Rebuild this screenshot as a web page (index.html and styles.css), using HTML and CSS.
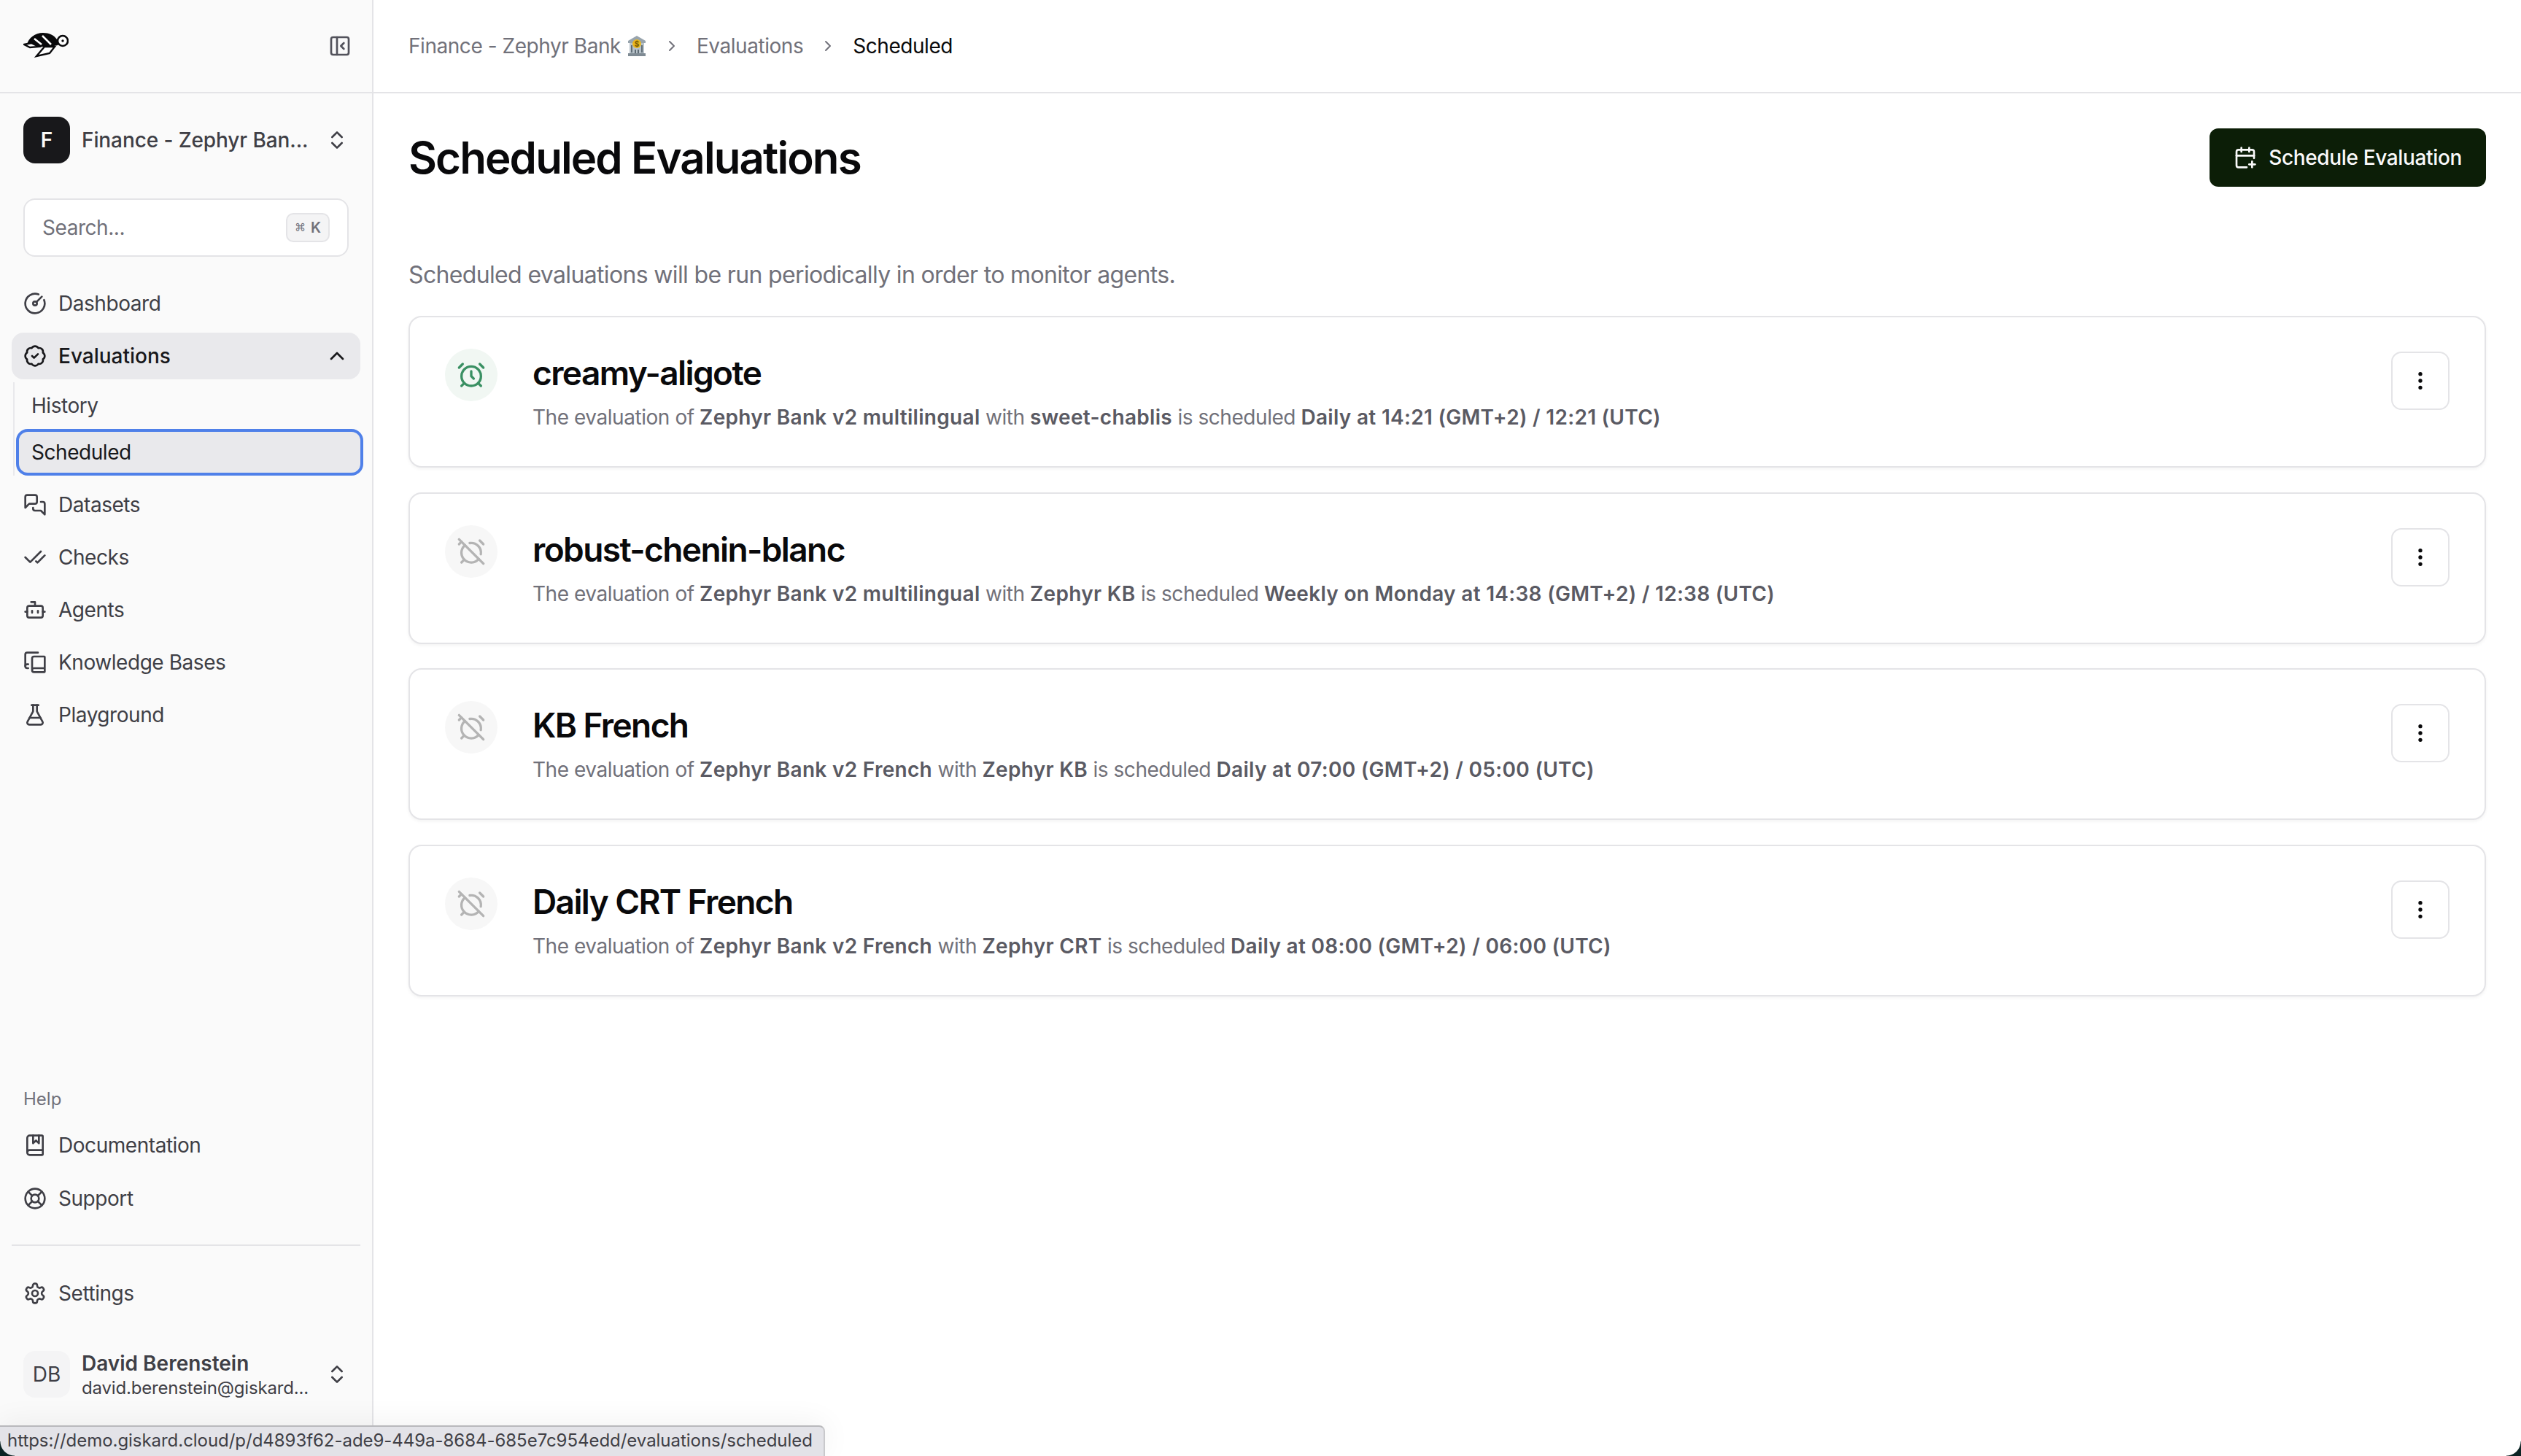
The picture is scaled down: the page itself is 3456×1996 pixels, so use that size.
FILE: index.html
```html
<!DOCTYPE html>
<html lang="en">
<head>
<meta charset="utf-8">
<title>Scheduled Evaluations</title>
<link rel="stylesheet" href="styles.css">
</head>
<body>
<svg class="sprites" width="0" height="0" aria-hidden="true">
  <defs>
    <symbol id="i-gauge" viewBox="0 0 24 24"><path d="M15.6 2.7a10 10 0 1 0 5.7 5.7"/><circle cx="12" cy="12" r="2"/><path d="M13.4 10.6 19 5"/></symbol>
    <symbol id="i-badge" viewBox="0 0 24 24"><path d="M3.85 8.62a4 4 0 0 1 4.78-4.77 4 4 0 0 1 6.74 0 4 4 0 0 1 4.78 4.78 4 4 0 0 1 0 6.74 4 4 0 0 1-4.77 4.78 4 4 0 0 1-6.75 0 4 4 0 0 1-4.78-4.77 4 4 0 0 1 0-6.76Z"/><path d="m9 12 2 2 4-4"/></symbol>
    <symbol id="i-msgs" viewBox="0 0 24 24"><path d="M14 9a2 2 0 0 1-2 2H6l-4 4V4a2 2 0 0 1 2-2h8a2 2 0 0 1 2 2z"/><path d="M18 9h2a2 2 0 0 1 2 2v11l-4-4h-6a2 2 0 0 1-2-2v-1"/></symbol>
    <symbol id="i-checks" viewBox="0 0 24 24"><path d="M18 6 7 17l-5-5"/><path d="m22 10-7.5 7.5L13 16"/></symbol>
    <symbol id="i-bot" viewBox="0 0 24 24"><path d="M12 8V4H8"/><rect width="16" height="12" x="4" y="8" rx="2"/><path d="M2 14h2"/><path d="M20 14h2"/><path d="M15 13v2"/><path d="M9 13v2"/></symbol>
    <symbol id="i-books" viewBox="0 0 24 24"><path d="M2 16V4a2 2 0 0 1 2-2h11"/><path d="M22 18H11a2 2 0 1 0 0 4h10.5a.5.5 0 0 0 .5-.5v-15a.5.5 0 0 0-.5-.5H11a2 2 0 0 0-2 2v12"/><path d="M5 14H4a2 2 0 1 0 0 4h1"/></symbol>
    <symbol id="i-flask" viewBox="0 0 24 24"><path d="M14 2v6a2 2 0 0 0 .245.96l5.51 10.08A2 2 0 0 1 18 22H6a2 2 0 0 1-1.755-2.96l5.51-10.08A2 2 0 0 0 10 8V2"/><path d="M6.453 15h11.094"/><path d="M8.5 2h7"/></symbol>
    <symbol id="i-book" viewBox="0 0 24 24"><path d="M10 2v8l3-3 3 3V2"/><path d="M4 19.5v-15A2.5 2.5 0 0 1 6.5 2H19a1 1 0 0 1 1 1v18a1 1 0 0 1-1 1H6.5a1 1 0 0 1 0-5H20"/></symbol>
    <symbol id="i-buoy" viewBox="0 0 24 24"><circle cx="12" cy="12" r="10"/><path d="m4.93 4.93 4.24 4.24"/><path d="m14.83 9.17 4.24-4.24"/><path d="m14.83 14.83 4.24 4.24"/><path d="m9.17 14.83-4.24 4.24"/><circle cx="12" cy="12" r="4"/></symbol>
    <symbol id="i-gear" viewBox="0 0 24 24"><path d="M12.22 2h-.44a2 2 0 0 0-2 2v.18a2 2 0 0 1-1 1.73l-.43.25a2 2 0 0 1-2 0l-.15-.08a2 2 0 0 0-2.73.73l-.22.38a2 2 0 0 0 .73 2.73l.15.1a2 2 0 0 1 1 1.72v.51a2 2 0 0 1-1 1.74l-.15.09a2 2 0 0 0-.73 2.73l.22.38a2 2 0 0 0 2.73.73l.15-.08a2 2 0 0 1 2 0l.43.25a2 2 0 0 1 1 1.73V20a2 2 0 0 0 2 2h.44a2 2 0 0 0 2-2v-.18a2 2 0 0 1 1-1.73l.43-.25a2 2 0 0 1 2 0l.15.08a2 2 0 0 0 2.73-.73l.22-.39a2 2 0 0 0-.73-2.73l-.15-.08a2 2 0 0 1-1-1.74v-.5a2 2 0 0 1 1-1.74l.15-.09a2 2 0 0 0 .73-2.73l-.22-.38a2 2 0 0 0-2.73-.73l-.15.08a2 2 0 0 1-2 0l-.43-.25a2 2 0 0 1-1-1.73V4a2 2 0 0 0-2-2z"/><circle cx="12" cy="12" r="3"/></symbol>
    <symbol id="i-updown" viewBox="0 0 24 24"><path d="m7 15 5 5 5-5"/><path d="m7 9 5-5 5 5"/></symbol>
    <symbol id="i-up" viewBox="0 0 24 24"><path d="m18 15-6-6-6 6"/></symbol>
    <symbol id="i-right" viewBox="0 0 24 24"><path d="m9 18 6-6-6-6"/></symbol>
    <symbol id="i-panel" viewBox="0 0 24 24"><rect width="18" height="18" x="3" y="3" rx="2"/><path d="M9 3v18"/><path d="m16 15-3-3 3-3"/></symbol>
    <symbol id="i-calplus" viewBox="0 0 24 24"><path d="M16 19h6"/><path d="M16 2v4"/><path d="M19 16v6"/><path d="M21 12.598V6a2 2 0 0 0-2-2H5a2 2 0 0 0-2 2v14a2 2 0 0 0 2 2h8.5"/><path d="M3 10h18"/><path d="M8 2v4"/></symbol>
    <symbol id="i-dots" viewBox="0 0 24 24"><circle cx="12" cy="12" r="1"/><circle cx="12" cy="5" r="1"/><circle cx="12" cy="19" r="1"/></symbol>
    <symbol id="i-alarm" viewBox="0 0 24 24"><circle cx="12" cy="13" r="8"/><path d="M12 9v4l2 2"/><path d="M5 3 2 6"/><path d="m22 6-3-3"/><path d="M6.38 18.7 4 21"/><path d="M17.64 18.67 20 21"/></symbol>
    <symbol id="i-alarmoff" viewBox="0 0 24 24"><path d="M6.87 6.87a8 8 0 1 0 11.26 11.26"/><path d="M19.9 14.25a8 8 0 0 0-9.15-9.15"/><path d="m22 6-3-3"/><path d="M6.26 18.67 4 21"/><path d="m2 2 20 20"/><path d="M4 4 2 6"/></symbol>
  </defs>
</svg>

<div class="app">
  <aside class="sidebar">
    <div class="side-top">
      <svg class="logo" viewBox="0 0 62 34" width="62" height="34" aria-label="Logo">
        <path class="logo-black" d="M5 16C7 7 16 0 27 0c8 0 15 3 19 9l3 4-4 4-5 2H14z"/>
        <path class="logo-neck" d="M44 16c3 0 4-1 5-4"/>
        <circle class="logo-head" cx="54" cy="11" r="7"/>
        <circle class="logo-eye" cx="54" cy="11" r="1.7"/>
        <path class="logo-stripe" d="M15 8l10 8M26 4l12 12"/>
        <path class="logo-flip" d="M1 16l10-2 10 5-12 1z"/>
        <path class="logo-flip" d="M18 32l11-13h14l-7 9z"/>
      </svg>
      <svg class="ico ico-panel"><use href="#i-panel"/></svg>
    </div>

    <div class="workspace">
      <span class="ws-avatar">F</span>
      <span class="ws-name">Finance - Zephyr Ban...</span>
      <svg class="ico"><use href="#i-updown"/></svg>
    </div>

    <div class="search">
      <span class="search-text">Search...</span>
      <span class="kbd"><span class="kbd-cmd">⌘</span><span>K</span></span>
    </div>

    <nav class="nav">
      <a class="nav-item"><svg class="ico"><use href="#i-gauge"/></svg><span>Dashboard</span></a>
      <a class="nav-item nav-open"><svg class="ico"><use href="#i-badge"/></svg><span>Evaluations</span><svg class="ico nav-chevron"><use href="#i-up"/></svg></a>
      <div class="sub">
        <a class="sub-item">History</a>
        <a class="sub-item sub-active">Scheduled</a>
      </div>
      <a class="nav-item"><svg class="ico"><use href="#i-msgs"/></svg><span>Datasets</span></a>
      <a class="nav-item"><svg class="ico"><use href="#i-checks"/></svg><span>Checks</span></a>
      <a class="nav-item"><svg class="ico"><use href="#i-bot"/></svg><span>Agents</span></a>
      <a class="nav-item"><svg class="ico"><use href="#i-books"/></svg><span>Knowledge Bases</span></a>
      <a class="nav-item"><svg class="ico"><use href="#i-flask"/></svg><span>Playground</span></a>
    </nav>

    <div class="side-foot">
      <div class="help-label">Help</div>
      <div class="nav foot-nav">
        <a class="nav-item"><svg class="ico"><use href="#i-book"/></svg><span>Documentation</span></a>
        <a class="nav-item"><svg class="ico"><use href="#i-buoy"/></svg><span>Support</span></a>
      </div>
      <div class="divider"></div>
      <div class="nav">
        <a class="nav-item"><svg class="ico"><use href="#i-gear"/></svg><span>Settings</span></a>
      </div>
      <div class="user">
        <span class="user-avatar">DB</span>
        <span class="user-text">
          <span class="user-name">David Berenstein</span>
          <span class="user-mail">david.berenstein@giskard...</span>
        </span>
        <svg class="ico"><use href="#i-updown"/></svg>
      </div>
    </div>
  </aside>

  <main class="main">
    <header class="crumbs">
      <span class="crumb">Finance - Zephyr Bank</span>
      <svg class="bank" viewBox="0 0 28 28" width="28" height="28" aria-label="bank">
        <path class="bank-roof" d="M14 0 26 7v3H2V7z"/>
        <rect class="bank-wall" x="4" y="10" width="20" height="15"/>
        <path class="bank-col" d="M7 13v10M21 13v10M12 19v6M16 19v6"/>
        <rect class="bank-base" x="2" y="24" width="24" height="4"/>
        <circle class="bank-coin" cx="14" cy="11" r="6"/>
        <text class="bank-sign" x="14" y="14.5" text-anchor="middle">$</text>
      </svg>
      <svg class="ico-crumb"><use href="#i-right"/></svg>
      <span class="crumb">Evaluations</span>
      <svg class="ico-crumb"><use href="#i-right"/></svg>
      <span class="crumb crumb-current">Scheduled</span>
    </header>

    <div class="page">
      <div class="page-head">
        <h1 class="title">Scheduled Evaluations</h1>
        <button class="btn-primary"><svg class="ico"><use href="#i-calplus"/></svg><span>Schedule Evaluation</span></button>
      </div>
      <p class="lead">Scheduled evaluations will be run periodically in order to monitor agents.</p>

      <div class="cards">
        <article class="card">
          <span class="status status-on"><svg class="ico-status"><use href="#i-alarm"/></svg></span>
          <div class="card-body">
            <h2 class="card-title">creamy-aligote</h2>
            <p class="card-desc">The evaluation of <b>Zephyr Bank v2 multilingual</b> with <b>sweet-chablis</b> is scheduled <b>Daily at 14:21 (GMT+2) / 12:21 (UTC)</b></p>
          </div>
          <button class="kebab"><svg class="ico"><use href="#i-dots"/></svg></button>
        </article>
        <article class="card">
          <span class="status"><svg class="ico-status"><use href="#i-alarmoff"/></svg></span>
          <div class="card-body">
            <h2 class="card-title">robust-chenin-blanc</h2>
            <p class="card-desc">The evaluation of <b>Zephyr Bank v2 multilingual</b> with <b>Zephyr KB</b> is scheduled <b>Weekly on Monday at 14:38 (GMT+2) / 12:38 (UTC)</b></p>
          </div>
          <button class="kebab"><svg class="ico"><use href="#i-dots"/></svg></button>
        </article>
        <article class="card">
          <span class="status"><svg class="ico-status"><use href="#i-alarmoff"/></svg></span>
          <div class="card-body">
            <h2 class="card-title">KB French</h2>
            <p class="card-desc">The evaluation of <b>Zephyr Bank v2 French</b> with <b>Zephyr KB</b> is scheduled <b>Daily at 07:00 (GMT+2) / 05:00 (UTC)</b></p>
          </div>
          <button class="kebab"><svg class="ico"><use href="#i-dots"/></svg></button>
        </article>
        <article class="card">
          <span class="status"><svg class="ico-status"><use href="#i-alarmoff"/></svg></span>
          <div class="card-body">
            <h2 class="card-title">Daily CRT French</h2>
            <p class="card-desc">The evaluation of <b>Zephyr Bank v2 French</b> with <b>Zephyr CRT</b> is scheduled <b>Daily at 08:00 (GMT+2) / 06:00 (UTC)</b></p>
          </div>
          <button class="kebab"><svg class="ico"><use href="#i-dots"/></svg></button>
        </article>
      </div>
    </div>
  </main>
</div>

<div class="statusbar">https://demo.giskard.cloud/p/d4893f62-ade9-449a-8684-685e7c954edd/evaluations/scheduled</div>
<div class="corner corner-left"></div>
<div class="corner corner-right"></div>
</body>
</html>
```

FILE: styles.css
```css
* { box-sizing: border-box; }

html, body {
  margin: 0;
  height: 100%;
  overflow: hidden;
}

body {
  font-family: Inter, "Liberation Sans", sans-serif;
  font-size: 28px;
  line-height: 40px;
  letter-spacing: -0.45px;
  color: #3f3f46;
  background: #fff;
}

.sprites { position: absolute; }

.ico, .ico-crumb, .ico-status {
  fill: none;
  stroke: currentColor;
  stroke-width: 2;
  stroke-linecap: round;
  stroke-linejoin: round;
  flex: none;
}
.ico { width: 32px; height: 32px; }

.app { display: flex; height: 100vh; }

/* Sidebar */
.sidebar {
  width: 512px;
  flex: none;
  display: flex;
  flex-direction: column;
  background: #fafafa;
  border-right: 2px solid #e4e4e7;
}

.side-top {
  height: 128px;
  flex: none;
  display: flex;
  align-items: center;
  justify-content: space-between;
  padding: 0 28px 0 32px;
  border-bottom: 2px solid #e4e4e7;
}

.logo { margin-top: -2px; }
.logo-black { fill: #09090b; }
.logo-neck { fill: none; stroke: #09090b; stroke-width: 3; }
.logo-head { fill: #fff; stroke: #09090b; stroke-width: 2.6; }
.logo-eye { fill: #09090b; }
.logo-stripe { fill: none; stroke: #fff; stroke-width: 2.6; }
.logo-flip { fill: #fff; stroke: #09090b; stroke-width: 2.4; stroke-linejoin: miter; }

.ico-panel { color: #52525b; }

.workspace {
  margin: 32px 32px 0;
  height: 64px;
  display: flex;
  align-items: center;
  gap: 16px;
  font-weight: 500;
  letter-spacing: -0.1px;
}
.ws-avatar {
  width: 64px;
  height: 64px;
  flex: none;
  display: flex;
  align-items: center;
  justify-content: center;
  border-radius: 16px;
  background: #18181b;
  color: #fafafa;
  font-weight: 600;
}
.ws-name { flex: 1; white-space: nowrap; overflow: hidden; }

.search {
  margin: 48px 32px 0;
  height: 80px;
  display: flex;
  align-items: center;
  justify-content: space-between;
  padding: 0 24px;
  background: #fff;
  border: 2px solid #e4e4e7;
  border-radius: 16px;
}
.search-text { color: #71717a; }
.kbd {
  width: 60px;
  height: 40px;
  display: flex;
  align-items: center;
  justify-content: center;
  gap: 7px;
  background: #f4f4f5;
  border: 2px solid #e4e4e7;
  border-radius: 10px;
  font-size: 20px;
  font-weight: 600;
  line-height: 1;
  letter-spacing: 0;
  color: #71717a;
}
.kbd-cmd { font-family: "DejaVu Sans", sans-serif; font-size: 15px; font-weight: 400; }

.nav {
  display: flex;
  flex-direction: column;
  gap: 8px;
  padding: 0 16px;
}
.sidebar > .nav { margin-top: 32px; }

.nav-item {
  height: 64px;
  display: flex;
  align-items: center;
  gap: 16px;
  padding: 0 16px;
  border-radius: 16px;
}
.nav-open {
  background: #e9e9ec;
  color: #18181b;
  font-weight: 500;
  letter-spacing: 0;
}
.nav-chevron { margin-left: auto; }

.sub {
  display: flex;
  flex-direction: column;
  width: 480px;
  margin: -4px 0 0 2px;
  padding-left: 2px;
  border-left: 2px solid #e9e9ec;
}
.sub-item {
  height: 64px;
  display: flex;
  align-items: center;
  padding-left: 21px;
}
.sub-active {
  padding-left: 17px;
  background: #e9e9ec;
  border: 4px solid #4f80e9;
  border-radius: 16px;
  color: #18181b;
}

.side-foot {
  margin-top: auto;
  padding-bottom: 80px;
}
.help-label {
  padding-left: 32px;
  font-size: 24px;
  line-height: 32px;
  letter-spacing: 0;
  color: #71717a;
}
.foot-nav { margin-top: 15px; gap: 9px; }
.divider {
  height: 2px;
  margin: 31px 16px 33px;
  background: #e4e4e7;
}

.user {
  margin: 47px 32px 0;
  height: 64px;
  display: flex;
  align-items: center;
  gap: 16px;
}
.user-avatar {
  width: 64px;
  height: 64px;
  flex: none;
  display: flex;
  align-items: center;
  justify-content: center;
  border-radius: 16px;
  background: #f4f4f5;
  letter-spacing: 0;
}
.user-text { flex: 1; min-width: 0; display: flex; flex-direction: column; padding-top: 2px; }
.user-name { font-weight: 600; line-height: 36px; letter-spacing: 0; }
.user-mail { font-size: 24px; line-height: 32px; letter-spacing: -0.17px; white-space: nowrap; }

/* Main */
.main { flex: 1; min-width: 0; display: flex; flex-direction: column; }

.crumbs {
  height: 128px;
  flex: none;
  display: flex;
  align-items: center;
  gap: 22px;
  padding: 0 48px;
  border-bottom: 2px solid #e4e4e7;
  color: #71717a;
}
.bank { margin-left: -14px; }
.bank-roof { fill: #98a4ad; }
.bank-wall { fill: #b7c2c9; }
.bank-col { fill: none; stroke: #5f6c75; stroke-width: 2; }
.bank-base { fill: #7f8b94; }
.bank-coin { fill: #e8b71f; }
.bank-sign { font-size: 10px; font-weight: 700; letter-spacing: 0; fill: #7a5a00; }
.crumb-current { color: #09090b; }
.ico-crumb { width: 24px; height: 24px; color: #71717a; }

.page { padding: 48px 48px 0; }

.page-head {
  display: flex;
  align-items: center;
  justify-content: space-between;
}
.title {
  margin: 0;
  font-size: 60px;
  line-height: 80px;
  font-weight: 600;
  letter-spacing: -1.9px;
  color: #09090b;
}
.btn-primary {
  height: 80px;
  display: flex;
  align-items: center;
  gap: 16px;
  padding: 0 33px;
  border: 0;
  border-radius: 12px;
  background: #0c1e07;
  color: #fafafa;
  font: 500 28px/40px Inter, "Liberation Sans", sans-serif;
  letter-spacing: -0.35px;
}

.lead {
  margin: 97px 0 32px;
  font-size: 32px;
  line-height: 48px;
  letter-spacing: -0.65px;
  color: #71717a;
}

.cards { display: flex; flex-direction: column; gap: 33.6px; }

.card {
  height: 208px;
  display: flex;
  align-items: flex-start;
  gap: 48px;
  padding: 43px 48px 0;
  background: #fff;
  border: 2px solid #e4e4e7;
  border-radius: 18px;
  box-shadow: 0 2px 4px rgba(0, 0, 0, .05);
}

.status {
  width: 72px;
  height: 72px;
  flex: none;
  display: flex;
  align-items: center;
  justify-content: center;
  border-radius: 50%;
  background: #f7f7f7;
  color: #b4b4b4;
}
.status-on { background: #f1f7f3; color: #3a9063; }
.ico-status { width: 40px; height: 40px; }

.card-body { flex: 1; min-width: 0; margin-top: 5px; }
.card-title {
  margin: 0;
  font-size: 46px;
  line-height: 56px;
  font-weight: 600;
  letter-spacing: -1.6px;
  color: #09090b;
}
.card-desc {
  margin: 13px 0 0;
  color: #71717a;
}
.card-desc b { font-weight: 600; letter-spacing: 0.3px; color: #5a5a63; }

.kebab {
  width: 80px;
  height: 80px;
  flex: none;
  margin-top: 4px;
  display: flex;
  align-items: center;
  justify-content: center;
  padding: 0;
  background: #fff;
  border: 2px solid #e4e4e7;
  border-radius: 14px;
  color: #09090b;
}

/* Browser chrome overlays */
.statusbar {
  position: absolute;
  left: 0;
  bottom: 0;
  width: 1131px;
  height: 42px;
  padding-left: 10px;
  background: #e3e3e8;
  border-top: 2px solid #b9b9bc;
  border-right: 2px solid #c9c9cc;
  border-top-right-radius: 8px;
  box-shadow: 0 -4px 40px rgba(0, 0, 0, .06);
  font-size: 24px;
  line-height: 38px;
  letter-spacing: -0.04px;
  color: #3f3f46;
  white-space: nowrap;
}

.corner { position: absolute; bottom: 0; width: 20px; height: 20px; }
.corner-left { left: 0; background: radial-gradient(circle at 100% 0, transparent 19px, #0b2424 20px); }
.corner-right { right: 0; background: radial-gradient(circle at 0 0, transparent 19px, #0b2424 20px); }
```
